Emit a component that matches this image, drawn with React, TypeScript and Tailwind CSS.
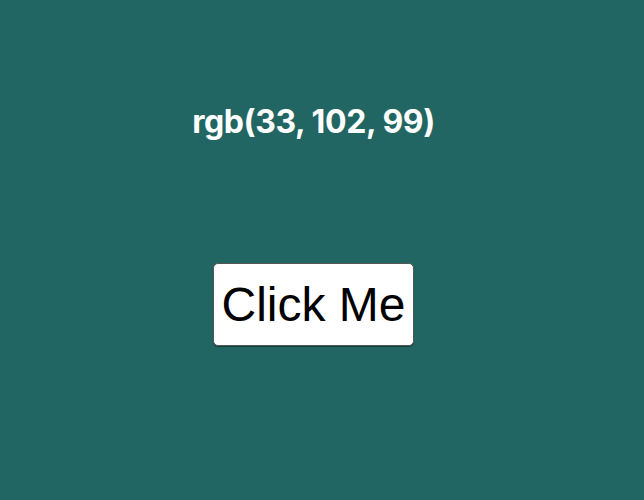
import React, { useState } from "react";

const App = () => {
  const [color] = useState("rgb(33, 102, 99)");

  return (
    <div className="min-h-[500px] w-full bg-[#216663] flex justify-start">
      <div className="w-[627px] flex flex-col items-center pt-[102px]">
        <h2
          className="text-[32px] leading-[40px] font-bold text-white tracking-[-0.4px]"
          style={{ fontFamily: "Inter, 'Noto Sans', sans-serif" }}
        >
          {color}
        </h2>
        <button
          className="mt-[121px] bg-white text-black border border-[#555] rounded-[5px] px-[7px] py-[13px] text-[48px] leading-[55px] shadow-[0_1px_1px_rgba(0,0,0,0.4)]"
          style={{ fontFamily: "'Liberation Sans', Arial, sans-serif" }}
        >
          Click Me
        </button>
      </div>
    </div>
  );
};

export default App;
